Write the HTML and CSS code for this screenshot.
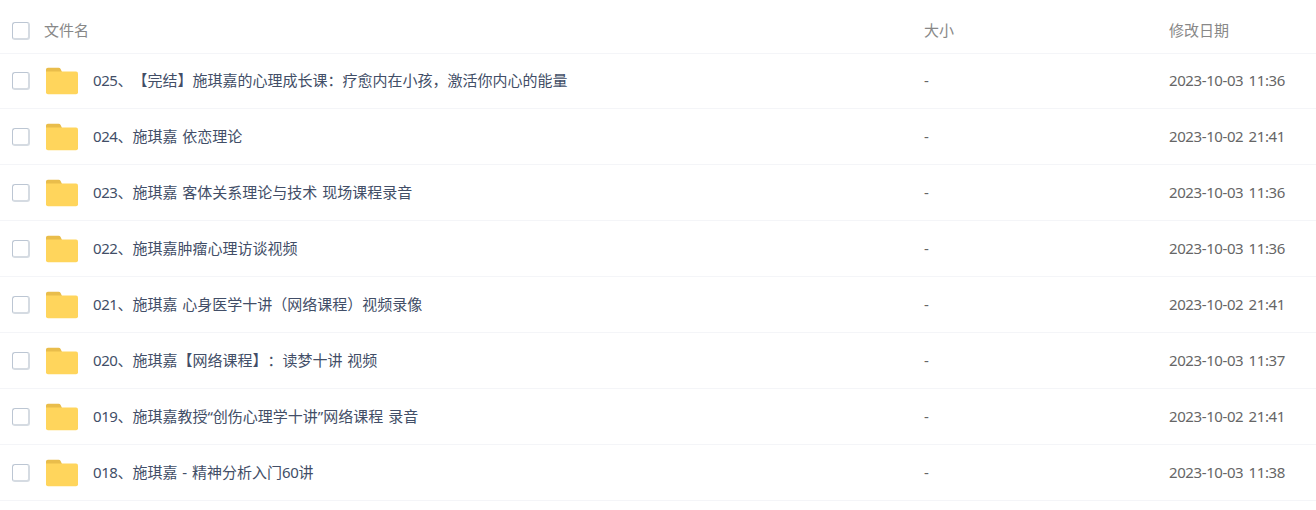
FILE: index.html
```html
<!DOCTYPE html>
<html lang="zh-CN">
<head>
    <meta charset="UTF-8">
    <meta name="viewport" content="width=device-width, initial-scale=1.0">
    <title>文件列表</title>
    <link rel="stylesheet" href="styles.css">
</head>
<body>
    <svg class="symbols" width="0" height="0">
        <symbol id="folder" viewBox="0 0 34 28">
            <path d="M1 9V2.6Q1 .7 2.9 .7H13.6Q15 .7 15.6 2L17 5V9Z" fill="#e9bd4b"/>
            <path d="M1 4.4H31Q33 4.4 33 6.4V25.2Q33 27.2 31 27.2H3Q1 27.2 1 25.2Z" fill="#ffd55c"/>
        </symbol>
    </svg>

    <div class="file-list">
        <div class="row header">
            <input type="checkbox" class="check">
            <div class="title">文件名</div>
            <div class="size">大小</div>
            <div class="date">修改日期</div>
        </div>
        <div class="rows">
            <div class="row">
                <input type="checkbox" class="check">
                <svg class="folder"><use href="#folder"/></svg>
                <div class="name"><span class="num">025</span>、【完结】施琪嘉的心理成长课：疗愈内在小孩，激活你内心的能量</div>
                <div class="size">-</div>
                <div class="date">2023-10-03 11:36</div>
            </div>
            <div class="row">
                <input type="checkbox" class="check">
                <svg class="folder"><use href="#folder"/></svg>
                <div class="name"><span class="num">024</span>、施琪嘉 依恋理论</div>
                <div class="size">-</div>
                <div class="date">2023-10-02 21:41</div>
            </div>
            <div class="row">
                <input type="checkbox" class="check">
                <svg class="folder"><use href="#folder"/></svg>
                <div class="name"><span class="num">023</span>、施琪嘉 客体关系理论与技术 现场课程录音</div>
                <div class="size">-</div>
                <div class="date">2023-10-03 11:36</div>
            </div>
            <div class="row">
                <input type="checkbox" class="check">
                <svg class="folder"><use href="#folder"/></svg>
                <div class="name"><span class="num">022</span>、施琪嘉肿瘤心理访谈视频</div>
                <div class="size">-</div>
                <div class="date">2023-10-03 11:36</div>
            </div>
            <div class="row">
                <input type="checkbox" class="check">
                <svg class="folder"><use href="#folder"/></svg>
                <div class="name"><span class="num">021</span>、施琪嘉 心身医学十讲（网络课程）视频录像</div>
                <div class="size">-</div>
                <div class="date">2023-10-02 21:41</div>
            </div>
            <div class="row">
                <input type="checkbox" class="check">
                <svg class="folder"><use href="#folder"/></svg>
                <div class="name"><span class="num">020</span>、施琪嘉【网络课程】：读梦十讲 视频</div>
                <div class="size">-</div>
                <div class="date">2023-10-03 11:37</div>
            </div>
            <div class="row">
                <input type="checkbox" class="check">
                <svg class="folder"><use href="#folder"/></svg>
                <div class="name"><span class="num">019</span>、施琪嘉教授“创伤心理学十讲”网络课程 录音</div>
                <div class="size">-</div>
                <div class="date">2023-10-02 21:41</div>
            </div>
            <div class="row">
                <input type="checkbox" class="check">
                <svg class="folder"><use href="#folder"/></svg>
                <div class="name"><span class="num">018</span>、施琪嘉 - 精神分析入门<span class="num">60</span>讲</div>
                <div class="size">-</div>
                <div class="date">2023-10-03 11:38</div>
            </div>
        </div>
    </div>
</body>
</html>
```
FILE: styles.css
```css
* {
    box-sizing: border-box;
}
body {
    margin: 0;
    background-color: #fff;
    font-family: "Noto Sans", "Noto Sans CJK SC", sans-serif;
    font-size: 15px;
    line-height: 22px;
    color: #424e67;
    text-spacing-trim: space-all;
}
.symbols {
    display: block;
}
.file-list {
    padding-top: 8px;
}
.row {
    display: flex;
    align-items: center;
    height: 56px;
    padding-left: 12px;
    border-bottom: 1px solid #f4f5f8;
    white-space: nowrap;
}
.header {
    height: 46px;
    color: #888;
}
/* first row shares the header line */
.rows {
    margin-top: -1px;
}
.check {
    appearance: none;
    flex: none;
    width: 18px;
    height: 18px;
    margin: 0;
    border: 1px solid #bcc6d3;
    border-right: 2px solid #d5dbe2;
    border-bottom: 2px solid #d5dbe2;
    border-radius: 3px;
    background-color: #fff;
}
.folder {
    flex: none;
    width: 34px;
    height: 28px;
    margin-left: 15px;
}
.title,
.name,
.size,
.date {
    padding-bottom: 2px;
}
.title {
    flex: 1;
    margin-left: 14px;
}
.name {
    flex: 1;
    margin-left: 14px;
    word-spacing: 1px;
}
.num {
    letter-spacing: -0.43px;
}
.size {
    width: 245px;
}
.date {
    width: 147px;
    letter-spacing: -0.4px;
    word-spacing: 1.8px;
}
.header .date {
    letter-spacing: 0;
}
.rows .size,
.rows .date {
    color: #666;
}
```
